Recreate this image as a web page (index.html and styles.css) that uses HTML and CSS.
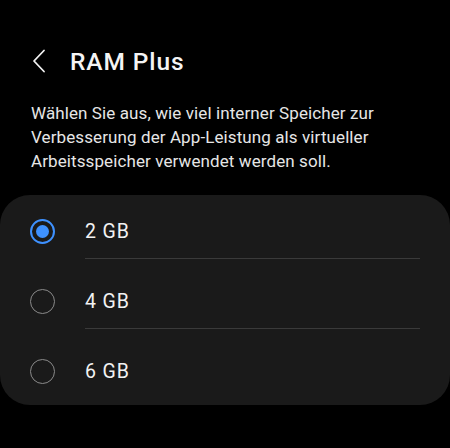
FILE: index.html
```html
<!DOCTYPE html>
<html lang="de">
<head>
    <meta charset="UTF-8">
    <meta name="viewport" content="width=device-width, initial-scale=1.0">
    <title>RAM Plus</title>
    <link rel="stylesheet" href="styles.css">
</head>
<body>
    <div class="header">
        <button class="back-button" aria-label="Zurück">
            <svg width="14" height="24" viewBox="0 0 14 24">
                <path d="M12 1.5 L2 12 L12 22.5" fill="none" stroke="#f2f2f2" stroke-width="1.8" stroke-linecap="round" stroke-linejoin="round"/>
            </svg>
        </button>
        <h1>RAM Plus</h1>
    </div>

    <p class="description">
        Wählen Sie aus, wie viel interner Speicher zur Verbesserung der App-Leistung als virtueller Arbeitsspeicher verwendet werden soll.
    </p>

    <div class="options">
        <label class="option first">
            <span class="radio checked"></span>
            <span class="option-label">2 GB</span>
        </label>
        <div class="divider"></div>
        <label class="option">
            <span class="radio"></span>
            <span class="option-label">4 GB</span>
        </label>
        <div class="divider"></div>
        <label class="option">
            <span class="radio"></span>
            <span class="option-label">6 GB</span>
        </label>
    </div>
</body>
</html>
```

FILE: styles.css
```css
* {
    margin: 0;
    padding: 0;
    box-sizing: border-box;
}

body {
    font-family: 'Roboto', 'Noto Sans', sans-serif;
    background: #000;
    color: #f2f2f2;
    width: 450px;
    height: 448px;
    overflow: hidden;
}

.header {
    display: flex;
    align-items: center;
    height: 60px;
    margin-top: 31px;
    padding-left: 32px;
}

.back-button {
    background: none;
    border: none;
    width: 14px;
    height: 24px;
    display: flex;
    margin-right: 24px;
}

h1 {
    font-size: 24.5px;
    font-weight: 500;
    letter-spacing: 0.9px;
    color: #f4f4f4;
}

.description {
    margin-top: 10px;
    padding: 0 31px;
    font-size: 17px;
    line-height: 24px;
    letter-spacing: 0.1px;
    color: #e6e6e6;
}

.options {
    margin-top: 22px;
    background: #1a1a1a;
    border-radius: 30px;
    padding-bottom: 7px;
}

.option {
    display: flex;
    align-items: center;
    height: 69px;
    padding: 15px 0 0 30px;
}

.option.first {
    height: 63px;
    padding-top: 10px;
}

.divider {
    height: 1px;
    margin: 0 30px 0 85px;
    background: #3a3a3a;
}

.radio {
    width: 25px;
    height: 25px;
    border: 1.5px solid #8a8a8a;
    border-radius: 50%;
    display: flex;
    align-items: center;
    justify-content: center;
    flex-shrink: 0;
}

.radio.checked {
    border: 2px solid #3e91ff;
}

.radio.checked::after {
    content: '';
    width: 13px;
    height: 13px;
    border-radius: 50%;
    background: #3e91ff;
}

.option-label {
    margin-left: 30px;
    font-size: 19.5px;
    letter-spacing: 0.9px;
    color: #f2f2f2;
}
```
